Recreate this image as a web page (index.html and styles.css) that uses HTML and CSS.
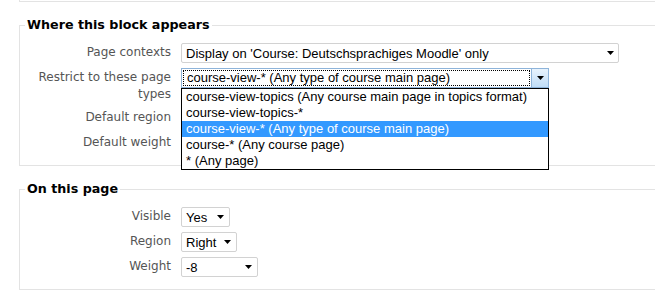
FILE: index.html
```html
<!DOCTYPE html>
<html lang="en">

<head>
    <meta charset="UTF-8">
    <meta name="viewport" content="width=device-width, initial-scale=1.0">

    <link rel="stylesheet" href="styles.css">

    <title>Block settings</title>
</head>

<body>
    <div class="fs_prev"></div>

    <fieldset class="fs">
        <legend>Where this block appears</legend>

        <div class="row">
            <div class="label">Page contexts</div>
            <div class="sel sel_wide">
                <span class="sel_text">Display on 'Course: Deutschsprachiges Moodle' only</span>
                <svg class="arrow" width="7" height="4" viewBox="0 0 7 4"><polygon points="0,0 7,0 3.5,4" fill="#000"/></svg>
            </div>
        </div>

        <div class="row">
            <div class="label">Restrict to these page types</div>
            <div class="combo">
                <div class="combo_box">
                    <span class="combo_focus">course-view-* (Any type of course main page)</span>
                    <span class="combo_btn">
                        <svg width="7" height="4" viewBox="0 0 7 4"><polygon points="0,0 7,0 3.5,4" fill="#000"/></svg>
                    </span>
                </div>
                <ul class="dropdown">
                    <li>course-view-topics (Any course main page in topics format)</li>
                    <li>course-view-topics-*</li>
                    <li class="active">course-view-* (Any type of course main page)</li>
                    <li>course-* (Any course page)</li>
                    <li>* (Any page)</li>
                </ul>
            </div>
        </div>

        <div class="row">
            <div class="label">Default region</div>
            <div class="sel" style="width: 56px">
                <span class="sel_text">Right</span>
                <svg class="arrow" width="7" height="4" viewBox="0 0 7 4"><polygon points="0,0 7,0 3.5,4" fill="#000"/></svg>
            </div>
        </div>

        <div class="row">
            <div class="label">Default weight</div>
            <div class="sel" style="width: 77px">
                <span class="sel_text">-8</span>
                <svg class="arrow" width="7" height="4" viewBox="0 0 7 4"><polygon points="0,0 7,0 3.5,4" fill="#000"/></svg>
            </div>
        </div>
    </fieldset>

    <fieldset class="fs">
        <legend>On this page</legend>

        <div class="row">
            <div class="label">Visible</div>
            <div class="sel" style="width: 49px">
                <span class="sel_text">Yes</span>
                <svg class="arrow" width="7" height="4" viewBox="0 0 7 4"><polygon points="0,0 7,0 3.5,4" fill="#000"/></svg>
            </div>
        </div>

        <div class="row">
            <div class="label">Region</div>
            <div class="sel" style="width: 56px">
                <span class="sel_text">Right</span>
                <svg class="arrow" width="7" height="4" viewBox="0 0 7 4"><polygon points="0,0 7,0 3.5,4" fill="#000"/></svg>
            </div>
        </div>

        <div class="row">
            <div class="label">Weight</div>
            <div class="sel" style="width: 77px">
                <span class="sel_text">-8</span>
                <svg class="arrow" width="7" height="4" viewBox="0 0 7 4"><polygon points="0,0 7,0 3.5,4" fill="#000"/></svg>
            </div>
        </div>
    </fieldset>
</body>

</html>
```

FILE: styles.css
```css
html,
body {
    margin: 0;
    background-color: #fff;
    overflow: hidden;
    font-family: "DejaVu Sans", Verdana, sans-serif;
}

/* bottom edge of the fieldset above, scrolled out of view */
.fs_prev {
    margin-left: 19px;
    width: 680px;
    height: 1px;
    border: 1px solid #e3e3e3;
    border-top: none;
}

.fs {
    margin: 15px 0 0 19px;
    width: 680px;
    padding: 10px 0 12px 0;
    border: 1px solid #e3e3e3;
    display: flex;
    flex-direction: column;
    gap: 5px;
}

.fs legend {
    margin-left: 5px;
    padding: 0 2px;
    font-size: 12.7px;
    font-weight: bold;
    line-height: 16px;
    color: #000;
}

.row {
    display: flex;
    align-items: flex-start;
    gap: 10px;
}

.label {
    width: 151px;
    flex: none;
    padding-top: 1px;
    text-align: right;
    font-size: 12px;
    line-height: 17px;
    color: #555;
}

.sel {
    position: relative;
    box-sizing: border-box;
    height: 20px;
    display: flex;
    align-items: center;
    justify-content: space-between;
    padding: 0 5px 0 4px;
    border: 1px solid #d2d2d2;
    border-radius: 2px;
    background-color: #fff;
    font-family: "Liberation Sans", Arial, sans-serif;
    font-size: 13px;
    color: #000;
}

.sel_wide {
    width: 438px;
    padding-right: 4px;
}

.sel_text {
    white-space: nowrap;
}

.arrow {
    flex: none;
}

/* focused combobox with its list open */
.combo {
    position: relative;
    width: 368px;
    font-family: "Liberation Sans", Arial, sans-serif;
    font-size: 13px;
    color: #000;
}

.combo_box {
    box-sizing: border-box;
    height: 20px;
    display: flex;
    border: 1px solid #8eb4da;
    background-color: #fff;
}

.combo_focus {
    flex: 1;
    margin: 1px;
    padding-left: 3px;
    border: 1px dotted #000;
    line-height: 14px;
    white-space: nowrap;
}

.combo_btn {
    flex: none;
    width: 16px;
    display: flex;
    align-items: center;
    justify-content: center;
    border-left: 1px solid #8eb4da;
    background: linear-gradient(#e8f3fd, #c0ddf7);
}

.dropdown {
    position: absolute;
    top: 20px;
    left: 0;
    z-index: 10;
    width: 366px;
    margin: 0;
    padding: 0;
    list-style: none;
    border: 1px solid #000;
    background-color: #fff;
}

.dropdown li {
    height: 16px;
    padding-left: 4px;
    line-height: 16px;
    white-space: nowrap;
}

.dropdown li.active {
    background-color: #3399ff;
    color: #fff;
}
```
